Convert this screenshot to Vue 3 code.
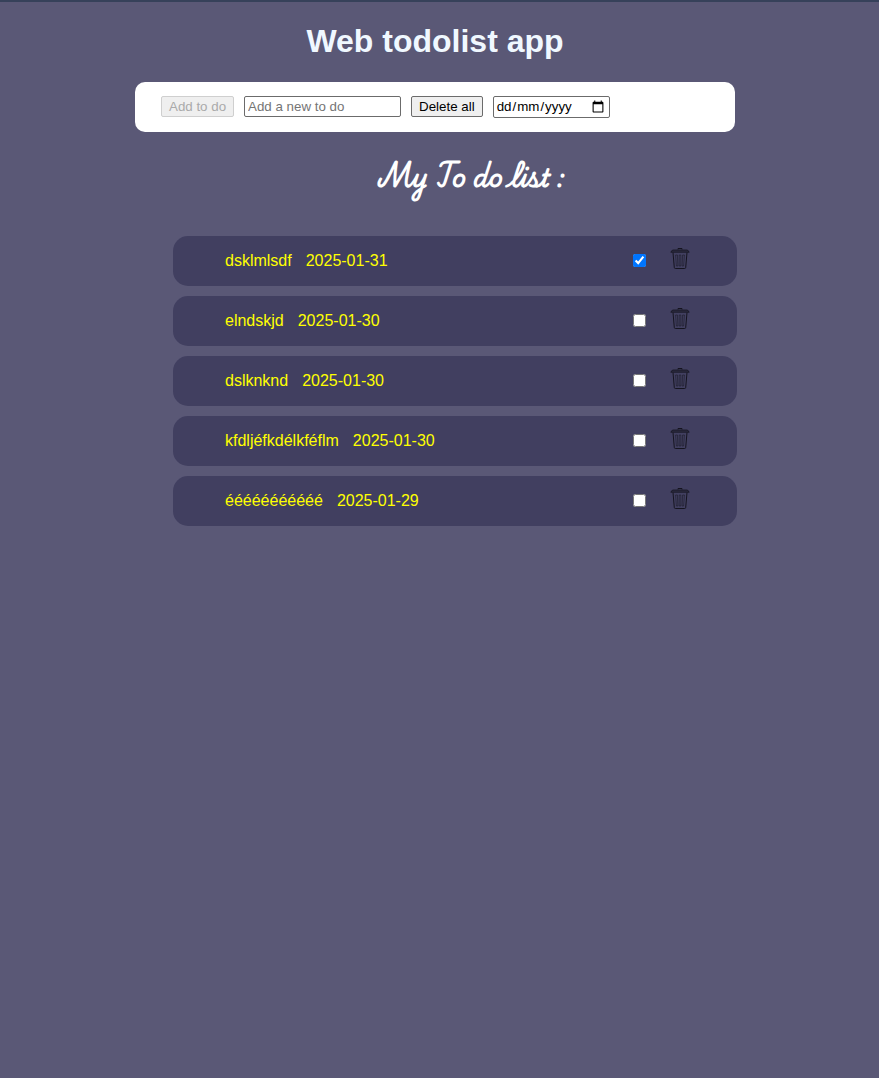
<script setup>
import { ref } from 'vue'

const draft = ref('')
const due = ref('')
const todos = ref([
  { id: 1, title: 'dsklmlsdf', date: '2025-01-31', done: true },
  { id: 2, title: 'elndskjd', date: '2025-01-30', done: false },
  { id: 3, title: 'dslknknd', date: '2025-01-30', done: false },
  { id: 4, title: 'kfdljéfkdélkféflm', date: '2025-01-30', done: false },
  { id: 5, title: 'ééééééééééé', date: '2025-01-29', done: false }
])

function add() {
  todos.value.push({ id: Date.now(), title: draft.value, date: due.value, done: false })
  draft.value = ''
}

function remove(id) {
  todos.value = todos.value.filter((todo) => todo.id !== id)
}
</script>

<template>
  <main class="page">
    <h1 class="title">Web todolist app</h1>
    <form class="toolbar" @submit.prevent="add">
      <button class="btn" type="submit" :disabled="!draft">Add to do</button>
      <input v-model="draft" class="field" type="text" placeholder="Add a new to do" aria-label="Add a new to do">
      <button class="btn" type="button" @click="todos = []">Delete all</button>
      <div class="date-wrap">
        <input v-model="due" class="date" :class="{ empty: !due }" type="date" aria-label="Due date">
        <span v-if="!due" class="hint"><span>dd</span>/<span>mm</span>/<span>yyyy</span></span>
      </div>
    </form>
    <h2 class="subtitle">My To do list :</h2>
    <ul class="list">
      <li v-for="todo in todos" :key="todo.id" class="item">
        <label class="text" :for="'todo-' + todo.id">
          <span>{{ todo.title }}</span>
          <span>{{ todo.date }}</span>
        </label>
        <input :id="'todo-' + todo.id" v-model="todo.done" class="check" type="checkbox">
        <button class="trash" type="button" aria-label="Delete" @click="remove(todo.id)">
          <svg width="20" height="22" viewBox="0 0 20 22" fill="none" stroke="#15141f">
            <path d="M8 2.500v-1h4v1" />
            <path d="M2.500 3h15l1.700 2.200H.8z" fill="#2c2b42" stroke-width=".8" />
            <path d="M3 5.500l1.300 15q.1 1 1.100 1h9.200q1 0 1.100-1L17 5.500" />
            <path d="M5.600 8l.8 11h1.500L7.400 8zM9.200 8h1.600v11H9.200zM12.600 8h1.800l-.8 11h-1.500z" stroke-width=".5" />
          </svg>
        </button>
      </li>
    </ul>
  </main>
</template>

<style>
body {
  background: #5a5876;
}
</style>

<style scoped>
.page {
  box-sizing: border-box;
  min-height: 100vh;
  padding: 20px 9px 20px 0;
  border-top: 2px solid #36415a;
  font-family: "Liberation Sans", Arial, sans-serif;
  font-size: 16px;
}

.title {
  margin: 0;
  color: aliceblue;
  font-size: 32px;
  line-height: 38px;
  text-align: center;
}

.toolbar {
  box-sizing: border-box;
  display: flex;
  align-items: flex-start;
  gap: 10px;
  max-width: 600px;
  min-height: 50px;
  margin: 22px auto 0;
  padding: 14px 26px;
  border-radius: 10px;
  background: #fff;
}

.btn,
.field,
.date {
  box-sizing: border-box;
  height: 21px;
  margin: 0;
  border: 1px solid #6b6b6b;
  border-radius: 2px;
  font-family: "Liberation Sans", Arial, sans-serif;
  font-size: smaller;
}

.btn {
  padding: 0 7px;
  background: #efefef;
  color: #000;
}

.btn:disabled {
  border-color: #cfcfcf;
  color: #aaa;
}

.field {
  width: 157px;
  padding: 1px 3px;
}

.date-wrap {
  position: relative;
}

.date {
  display: block;
  width: 117px;
  height: 22px;
  padding: 0 2px 1px;
}

.date.empty::-webkit-datetime-edit {
  color: transparent;
}

.hint {
  position: absolute;
  top: 1px;
  left: 3px;
  font-size: smaller;
  line-height: 20px;
  pointer-events: none;
}

.hint span {
  padding: 0 1px;
}

.subtitle {
  margin: 20px 0 0 72px;
  color: #fff;
  font-family: "Playwrite IN", "Playwrite US Trad", Pacifico, cursive;
  font-size: 24px;
  font-weight: 700;
  line-height: 48px;
  text-align: center;
}

.list {
  padding: 0 0 0 40px;
  margin: 36px 0 0;
  list-style: none;
}

.item {
  box-sizing: border-box;
  display: flex;
  align-items: center;
  max-width: 564px;
  height: 50px;
  margin: 0 auto 10px;
  padding: 0 47px 0 52px;
  border-radius: 15px;
  background: #413f60;
  color: yellow;
}

.text {
  display: flex;
  flex: 1;
  gap: 14px;
}

.check {
  width: 13px;
  height: 13px;
  margin: 0 24px 1px 0;
}

.trash {
  display: flex;
  margin-bottom: 6px;
  padding: 0;
  border: 0;
  background: none;
}
</style>
